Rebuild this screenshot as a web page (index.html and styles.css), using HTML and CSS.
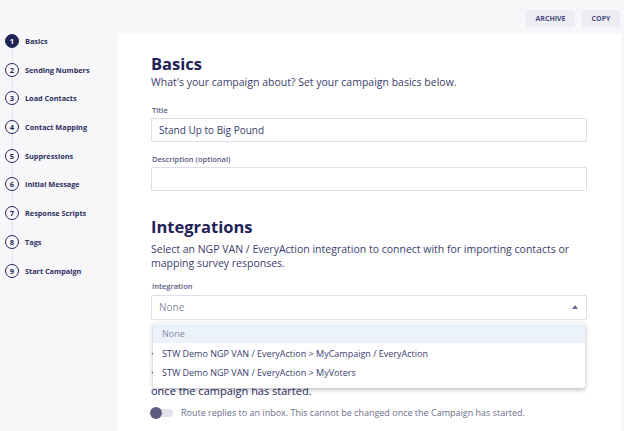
FILE: index.html
```html
<!DOCTYPE html>
<html>
<head>
<meta charset="utf-8">
<link rel="stylesheet" href="styles.css">
</head>
<body>
<div class="page">
  <nav class="steps">
    <div class="step active"><span class="num">1</span><span class="label">Basics</span></div>
    <div class="step"><span class="num">2</span><span class="label">Sending Numbers</span></div>
    <div class="step"><span class="num">3</span><span class="label">Load Contacts</span></div>
    <div class="step"><span class="num">4</span><span class="label">Contact Mapping</span></div>
    <div class="step"><span class="num">5</span><span class="label">Suppressions</span></div>
    <div class="step"><span class="num">6</span><span class="label">Initial Message</span></div>
    <div class="step"><span class="num">7</span><span class="label">Response Scripts</span></div>
    <div class="step"><span class="num">8</span><span class="label">Tags</span></div>
    <div class="step last"><span class="num">9</span><span class="label">Start Campaign</span></div>
  </nav>
  <div class="main">
    <div class="topbar">
      <button class="btn">ARCHIVE</button>
      <button class="btn">COPY</button>
    </div>
    <div class="card">
      <h1 class="title">Basics</h1>
      <p class="sub">What's your campaign about? Set your campaign basics below.</p>
      <label class="lbl lbl-first">Title</label>
      <div class="input">Stand Up to Big Pound</div>
      <label class="lbl">Description (optional)</label>
      <div class="input"></div>

      <h1 class="title title-2">Integrations</h1>
      <p class="para">Select an NGP VAN / EveryAction integration to connect with for importing contacts or mapping survey responses.</p>
      <label class="lbl">Integration</label>
      <div class="select-wrap">
        <div class="input select"><span class="placeholder">None</span><span class="caret"></span></div>
        <ul class="menu">
          <li class="opt opt-none">None</li>
          <li class="opt">STW Demo NGP VAN / EveryAction &gt; MyCampaign / EveryAction</li>
          <li class="opt">STW Demo NGP VAN / EveryAction &gt; MyVoters</li>
        </ul>
      </div>
      <p class="behind">· contacts for this campaign will be routed to an inbox.<br>· setting determines where replies are sent and it cannot be changed<br>once the campaign has started.</p>
      <div class="toggle-row">
        <span class="toggle"><span class="thumb"></span></span>
        <span class="toggle-text">Route replies to an inbox. This cannot be changed once the Campaign has started.</span>
      </div>
    </div>
  </div>
</div>
</body>
</html>
```

FILE: styles.css
```css
* { box-sizing: border-box; }
html, body { margin: 0; padding: 0; }
body {
  background: #f7f7fa;
  font-family: "Open Sans", "Liberation Sans", sans-serif;
  color: #383c6a;
  width: 624px;
  height: 431px;
  overflow: hidden;
}
.page {
  display: grid;
  grid-template-columns: 118px 1fr;
  height: 431px;
}
.steps {
  padding-top: 26.7px;
  padding-left: 5px;
  display: flex;
  flex-direction: column;
}
.step {
  position: relative;
  display: flex;
  align-items: center;
  height: 28.7px;
}
.step::after {
  content: "";
  position: absolute;
  left: 6.5px;
  top: 21.35px;
  height: 14.7px;
  width: 1px;
  background: #e6e6ee;
}
.step.last::after { display: none; }
.num {
  width: 14px;
  height: 14px;
  border-radius: 50%;
  border: 1.5px solid #23275a;
  color: #23275a;
  font-size: 7.5px;
  font-weight: 700;
  display: flex;
  align-items: center;
  justify-content: center;
  flex: none;
  background: #f7f7fa;
}
.step.active .num {
  background: #1f2356;
  color: #fff;
}
.label {
  margin-left: 6px;
  font-size: 7.3px;
  font-weight: 700;
  color: #2b2f5e;
}
.main {
  display: flex;
  flex-direction: column;
  padding-right: 3px;
}
.topbar {
  height: 34px;
  display: flex;
  justify-content: flex-end;
  align-items: flex-start;
  gap: 7px;
  padding-top: 10px;
  padding-right: 1px;
}
.btn {
  border: 0;
  background: #ececf3;
  color: #4a4e7c;
  font-family: "Open Sans", sans-serif;
  font-size: 7px;
  font-weight: 700;
  height: 17px;
  padding: 0;
  border-radius: 2px;
}
.btn:first-child { width: 49px; }
.btn:last-child { width: 38px; }
.card {
  flex: 1;
  background: #fff;
  padding: 19px 34px 0 33px;
  border-radius: 2px 2px 0 0;
}
.title {
  margin: 0;
  font-size: 16.5px;
  line-height: 22px;
  font-weight: 700;
  color: #1e2257;
}
.title-2 { margin-top: 24.6px; }
.sub {
  margin: 0;
  font-size: 10.5px;
  line-height: 14px;
  color: #3a3e6c;
}
.para {
  margin: 4.4px 0 0;
  font-size: 10.5px;
  line-height: 14px;
  color: #3a3e6c;
}
.lbl {
  display: block;
  font-size: 7.5px;
  font-weight: 600;
  color: #575b80;
  margin: 12.5px 0 3.5px 1px;
  line-height: 9px;
}
.lbl-first { margin-top: 16.5px; }
.input {
  height: 24px;
  border: 1px solid #dedee6;
  border-radius: 1px;
  padding: 0 7px;
  display: flex;
  align-items: center;
  font-size: 10px;
  color: #383c6a;
}
.select-wrap { position: relative; }
.select {
  height: 25px;
  justify-content: space-between;
  padding-right: 8px;
}
.placeholder { color: #8a8ca4; }
.caret {
  width: 0;
  height: 0;
  border-left: 3.5px solid transparent;
  border-right: 3.5px solid transparent;
  border-bottom: 4px solid #6a6c8c;
}
.menu {
  position: absolute;
  left: 2px;
  right: 2px;
  top: 28px;
  margin: 0;
  padding: 1px 0 5.5px;
  list-style: none;
  background: #fff;
  box-shadow: 0 2px 5px rgba(30, 30, 60, 0.28), 0 0 1px rgba(30, 30, 60, 0.2);
  border-radius: 2px;
  z-index: 5;
}
.opt {
  height: 19.5px;
  padding-left: 9px;
  display: flex;
  align-items: center;
  font-size: 9px;
  color: #3a3e70;
}
.opt-none {
  background: #ebf2fb;
  color: #8a8ca4;
}
.behind {
  margin: 23.5px 0 0;
  font-size: 11px;
  line-height: 19px;
  color: #2a2e5a;
}
.toggle-row {
  display: flex;
  align-items: center;
  height: 12px;
  margin-top: 6.5px;
  gap: 8px;
}
.toggle {
  position: relative;
  width: 22px;
  height: 8px;
  border-radius: 4px;
  background: #e2e2ea;
  flex: none;
}
.thumb {
  position: absolute;
  left: -1px;
  top: -2px;
  width: 12px;
  height: 12px;
  border-radius: 50%;
  background: #5b5c80;
}
.toggle-text {
  font-size: 9px;
  color: #6c6e8c;
}
```
